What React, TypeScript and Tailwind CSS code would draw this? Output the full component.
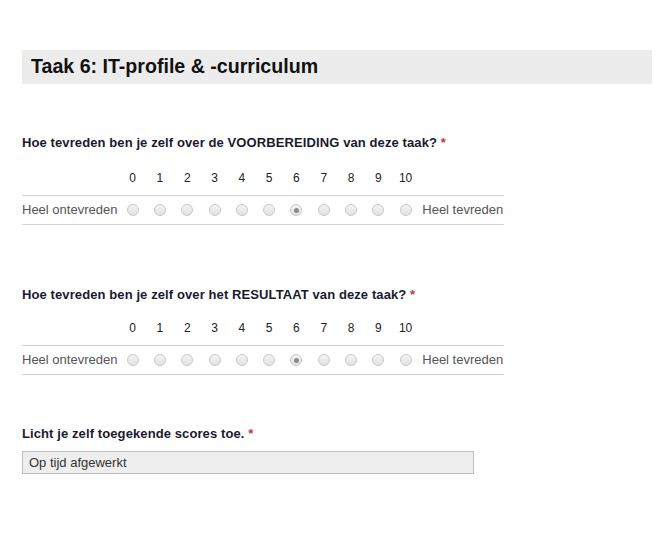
import React from "react";

const nums = [0, 1, 2, 3, 4, 5, 6, 7, 8, 9, 10];

function Radio({ checked }: { checked?: boolean }) {
  return (
    <span className="inline-flex h-[12px] w-[12px] items-center justify-center rounded-full border border-[#c8c8c8] bg-[linear-gradient(#f4f4f4,#e2e2e2)]">
      {checked && <span className="h-[5px] w-[5px] rounded-full bg-[#8a8a8a]" />}
    </span>
  );
}

function Scale({ question, keyword, tight }: { question: [string, string]; keyword: string; tight?: boolean }) {
  return (
    <div>
      <div className="h-[18px] text-[13px] font-bold leading-[18px] tracking-[0.1px] text-[#1a1a2e]">
        {question[0]}
        {keyword}
        {question[1]} <span className="text-[#c43b3b]">*</span>
      </div>
      <div
        className={
          (tight ? "mt-[15px] " : "mt-[17px] ") +
          "grid w-[482px] grid-cols-[97px_repeat(11,27.3px)_1fr] text-[13px]"
        }
      >
        <div className="h-[18px]" />
        {nums.map((n) => (
          <div key={n} className="h-[18px] text-center text-[12px] leading-[18px] text-[#222]">
            {n}
          </div>
        ))}
        <div />
      </div>
      <div className="mt-[8px] grid h-[30px] w-[482px] grid-cols-[97px_repeat(11,27.3px)_1fr] items-center border-y border-[#d2d2d2] text-[13px] text-[#555]">
        <div className="leading-[18px]">Heel ontevreden</div>
        {nums.map((n) => (
          <div key={n} className="flex items-center justify-center">
            <Radio checked={n === 6} />
          </div>
        ))}
        <div className="pl-[3px] leading-[18px]">Heel tevreden</div>
      </div>
    </div>
  );
}

export default function App() {
  return (
    <div className="min-h-[546px] bg-white pl-[22px] pt-[50px] font-['Liberation_Sans',Arial,sans-serif]">
      <div className="flex h-[34px] w-[630px] items-center bg-[#ececec] pl-[9px]">
        <h1 className="text-[19.6px] font-bold leading-none text-[#111]">Taak 6: IT-profile &amp; -curriculum</h1>
      </div>
      <div className="mt-[50px]">
        <Scale question={["Hoe tevreden ben je zelf over de ", " van deze taak?"]} keyword="VOORBEREIDING" />
      </div>
      <div className="mt-[61px]">
        <Scale question={["Hoe tevreden ben je zelf over het ", " van deze taak?"]} keyword="RESULTAAT" tight />
      </div>
      <div className="mt-[50px]">
        <div className="h-[18px] text-[13px] font-bold leading-[18px] tracking-[0.1px] text-[#1a1a2e]">
          Licht je zelf toegekende scores toe. <span className="text-[#c43b3b]">*</span>
        </div>
        <div className="mt-[8px] flex h-[23px] w-[452px] items-center border border-[#bdbdbd] bg-[#eeeeee] pl-[6px] text-[13px] text-[#333]">
          Op tijd afgewerkt
        </div>
      </div>
    </div>
  );
}
